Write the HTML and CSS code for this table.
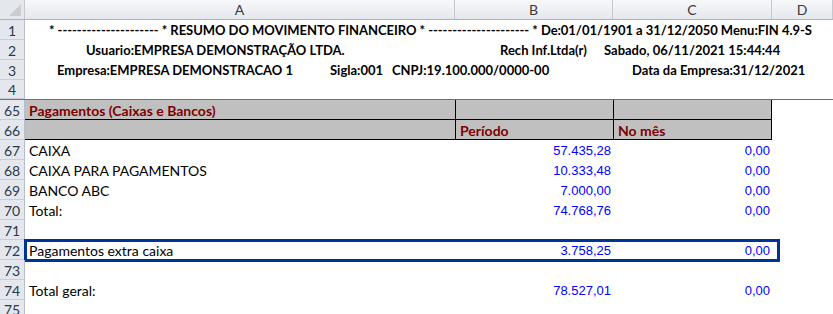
FILE: index.html
```html
<!DOCTYPE html>
<html lang="pt-BR">
<head>
<meta charset="utf-8">
<title>Resumo do Movimento Financeiro</title>
<link rel="stylesheet" href="styles.css">
</head>
<body>
<div class="sheet">
  <div class="row colhead">
    <div class="corner"><svg width="12" height="12" viewBox="0 0 12 12"><polygon points="12,0 12,12 0,12" fill="#c9ccd1"/></svg></div>
    <div class="ch">A</div>
    <div class="ch">B</div>
    <div class="ch">C</div>
    <div class="ch">D</div>
  </div>

  <div class="row">
    <div class="rh">1</div>
    <div class="span top t1"><span>* --------------------- * RESUMO DO MOVIMENTO FINANCEIRO * --------------------- * De:01/01/1901 a 31/12/2050 Menu:FIN 4.9-S</span></div>
  </div>
  <div class="row">
    <div class="rh">2</div>
    <div class="span top t2">
      <span class="s21">Usuario:EMPRESA DEMONSTRAÇÃO LTDA.</span>
      <span class="s22">Rech Inf.Ltda(r)</span>
      <span>Sabado, 06/11/2021 15:44:44</span>
    </div>
  </div>
  <div class="row">
    <div class="rh">3</div>
    <div class="span top t3">
      <span class="s31">Empresa:EMPRESA DEMONSTRACAO 1</span>
      <span class="s32">Sigla:001</span>
      <span class="s33">CNPJ:19.100.000/0000-00</span>
      <span>Data da Empresa:31/12/2021</span>
    </div>
  </div>
  <div class="row freeze">
    <div class="rh">4</div>
  </div>

  <div class="row band">
    <div class="rh">65</div>
    <div class="c a title">Pagamentos (Caixas e Bancos)</div>
    <div class="c b"></div>
    <div class="c cc"></div>
  </div>
  <div class="row band">
    <div class="rh">66</div>
    <div class="c a"></div>
    <div class="c b title">Período</div>
    <div class="c cc title">No mês</div>
  </div>

  <div class="row">
    <div class="rh">67</div>
    <div class="c a">CAIXA</div>
    <div class="c num">57.435,28</div>
    <div class="c num">0,00</div>
  </div>
  <div class="row">
    <div class="rh">68</div>
    <div class="c a">CAIXA PARA PAGAMENTOS</div>
    <div class="c num">10.333,48</div>
    <div class="c num">0,00</div>
  </div>
  <div class="row">
    <div class="rh">69</div>
    <div class="c a">BANCO ABC</div>
    <div class="c num">7.000,00</div>
    <div class="c num">0,00</div>
  </div>
  <div class="row">
    <div class="rh">70</div>
    <div class="c a">Total:</div>
    <div class="c num">74.768,76</div>
    <div class="c num">0,00</div>
  </div>
  <div class="row">
    <div class="rh">71</div>
  </div>
  <div class="row">
    <div class="rh">72</div>
    <div class="c a">Pagamentos extra caixa</div>
    <div class="c num">3.758,25</div>
    <div class="c num">0,00</div>
    <div class="highlight"></div>
  </div>
  <div class="row">
    <div class="rh">73</div>
  </div>
  <div class="row">
    <div class="rh">74</div>
    <div class="c a">Total geral:</div>
    <div class="c num">78.527,01</div>
    <div class="c num">0,00</div>
  </div>
  <div class="row last">
    <div class="rh">75</div>
  </div>
</div>
</body>
</html>
```
FILE: styles.css
```css
html, body {
  margin: 0;
  padding: 0;
  background: #ffffff;
  overflow: hidden;
}
.sheet {
  width: 833px;
  height: 314px;
  overflow: hidden;
  font-family: Lato, "Liberation Sans", sans-serif;
  font-size: 14px;
  color: #000;
}
.row {
  position: relative;
  display: grid;
  grid-template-columns: 25px 430px 158px 159px 61px;
  height: 20px;
  align-items: stretch;
}
.colhead {
  background: linear-gradient(#f7f8fa, #e4e7ec);
  border-bottom: 1px solid #9eb6ce;
  height: 19px;
}
.corner {
  border-right: 1px solid #c5c9cf;
  display: flex;
  align-items: flex-end;
  justify-content: flex-end;
  padding: 0 3px 3px 0;
  background: #e4e7ec;
}
.ch {
  border-right: 1px solid #c5c9cf;
  display: flex;
  align-items: center;
  justify-content: center;
  color: #3a3a3a;
  font-size: 14px;
}
.rh {
  grid-column: 1;
  background: #e4e8ee;
  border-right: 1px solid #b8bec7;
  border-bottom: 1px solid #c8ccd3;
  color: #303846;
  display: flex;
  align-items: center;
  justify-content: center;
  font-size: 14px;
  box-sizing: border-box;
  padding-top: 1px;
}
.last .rh {
  align-items: flex-start;
  padding-top: 2px;
  line-height: 16px;
}
.span {
  grid-column: 2 / -1;
  display: flex;
  align-items: center;
  white-space: pre;
  font-weight: 700;
  font-size: 13px;
}
.t1 { padding-left: 24px; letter-spacing: -0.04px; }
.t2 { padding-left: 61px; }
.t3 { padding-left: 32px; }
.s21 { width: 414px; }
.s22 { width: 104px; }
.s31 { width: 273px; }
.s32 { width: 62px; }
.s33 { width: 240px; }
.freeze {
  border-bottom: 1px solid #707070;
  height: 19px;
}
.c {
  display: flex;
  align-items: center;
  white-space: nowrap;
  box-sizing: border-box;
  padding: 1px 3px 0 4px;
}
.band .c {
  background: #c0c0c0;
  border-bottom: 1px solid #000;
}
.band .b, .band .cc {
  border-left: 1px solid #000;
}
.band .cc {
  border-right: 1px solid #000;
}
.title {
  color: #800000;
  font-weight: 700;
}
.num {
  justify-content: flex-end;
  color: #0000ff;
  font-family: "Liberation Sans", sans-serif;
  font-size: 13px;
  padding-right: 2px;
}
.highlight {
  position: absolute;
  left: 24px;
  top: -1px;
  width: 756px;
  height: 23px;
  border: 3px solid #003399;
  box-sizing: border-box;
  pointer-events: none;
}
```
